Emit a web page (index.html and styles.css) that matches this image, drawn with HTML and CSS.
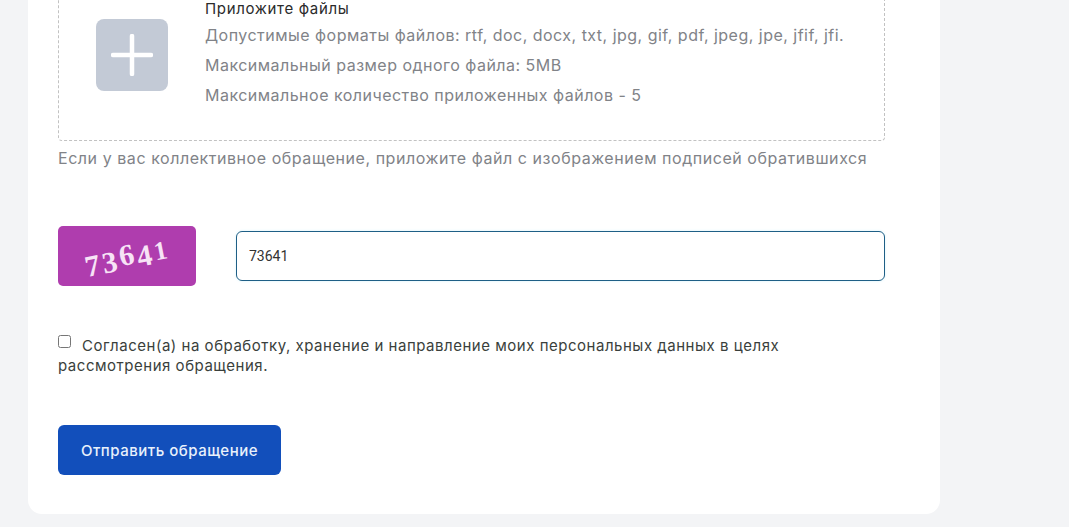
FILE: index.html
```html
<!DOCTYPE html>
<html lang="ru">
<head>
<meta charset="utf-8">
<title>Обращение</title>
<link rel="stylesheet" href="styles.css">
</head>
<body>
<main class="page">
  <form class="card">
    <div class="dropzone">
      <div class="plus-box">
        <svg class="plus-icon" viewBox="0 0 42 42" width="42" height="42" aria-hidden="true"><path d="M21 2v38M2 21h38" stroke="#fff" stroke-width="4.5" stroke-linecap="round"/></svg>
      </div>
      <div class="drop-text">
        <div class="drop-title">Приложите файлы</div>
        <div class="drop-line">Допустимые форматы файлов: rtf, doc, docx, txt, jpg, gif, pdf, jpeg, jpe, jfif, jfi.</div>
        <div class="drop-line">Максимальный размер одного файла: 5MB</div>
        <div class="drop-line">Максимальное количество приложенных файлов - 5</div>
      </div>
    </div>
    <p class="hint">Если у вас коллективное обращение, приложите файл с изображением подписей обратившихся</p>
    <div class="captcha-row">
      <div class="captcha"><span class="captcha-text"><span class="digit-low">7</span><span class="digit-low">3</span><span class="digit-high">6</span><span class="digit-low">4</span><span class="digit-small">1</span></span></div>
      <input class="captcha-input" type="text" value="73641">
    </div>
    <label class="consent"><input class="consent-box" type="checkbox">Согласен(а) на обработку, хранение и направление моих персональных данных в целях рассмотрения обращения.</label>
    <button class="submit" type="button">Отправить обращение</button>
  </form>
</main>
</body>
</html>
```
FILE: styles.css
```css
* { box-sizing: border-box; }
html, body { margin: 0; height: 100%; overflow: hidden; }
body { background: #f3f4f6; font-family: "Inter", "Noto Sans", sans-serif; }
.page {
  height: 527px;
  display: flex;
  flex-direction: column;
  justify-content: flex-end;
  padding: 0 0 13px 28px;
}
.card {
  flex: none;
  width: 912px;
  background: #fff;
  border-radius: 14px;
  padding: 0 55px 39px 30px;
}
.dropzone {
  height: 171px;
  border: 1px dashed #c2c2c2;
  border-radius: 4px;
  display: flex;
  padding: 29px 0 0 37px;
}
.plus-box {
  flex: none;
  width: 72px;
  height: 72px;
  margin-top: 19px;
  border-radius: 8px;
  background: #c3cad6;
  display: flex;
  align-items: center;
  justify-content: center;
}
.drop-text { margin-left: 37px; }
.drop-title { font-size: 15px; letter-spacing: 0.65px; line-height: 18px; color: #2b2b2b; }
.drop-line { font-size: 16px; letter-spacing: 0.48px; line-height: 30px; color: #818388; white-space: nowrap; }
.drop-title + .drop-line { margin-top: 2px; }
.hint { margin: 7px 0 0; font-size: 16px; letter-spacing: 0.55px; line-height: 20px; color: #818388; white-space: nowrap; }
.captcha-row { display: flex; align-items: center; margin-top: 58px; }
.captcha {
  width: 138px;
  height: 60px;
  border-radius: 5px;
  background: #af3dae;
  display: flex;
  align-items: center;
  justify-content: center;
  flex: none;
}
.captcha-text {
  display: flex;
  align-items: baseline;
  font-family: "Liberation Serif", serif;
  font-weight: 700;
  font-size: 30px;
  line-height: 30px;
  letter-spacing: 2.6px;
  color: #f7e3f6;
  transform: translate(0, 1px) rotate(-11deg);
}
.digit-low { transform: translateY(3px); }
.digit-high { transform: translateY(-1px); }
.digit-small { font-size: 26px; }
.captcha-input {
  flex: 1;
  margin-left: 40px;
  height: 50px;
  border: 1px solid #1f5f86;
  border-radius: 6px;
  padding: 0 12px;
  font-family: "Roboto", sans-serif;
  font-size: 14px;
  color: #333;
  background: #fff;
  box-shadow: 0 0 3px #d8f3fb;
  outline: 0;
}
.consent {
  display: block;
  max-width: 790px;
  margin-top: 49px;
  font-size: 15px;
  letter-spacing: 0.52px;
  line-height: 20px;
  color: #3a3f3c;
}
.consent-box {
  width: 13px;
  height: 13px;
  margin: 0 11px 0 0;
  vertical-align: 3px;
}
.submit {
  display: block;
  width: 223px;
  height: 50px;
  margin-top: 49px;
  border: 0;
  border-radius: 6px;
  background: #124fbb;
  color: #e9f1fb;
  font-family: inherit;
  font-size: 15px;
  letter-spacing: 0.5px;
  font-weight: 500;
  text-align: center;
}
```
